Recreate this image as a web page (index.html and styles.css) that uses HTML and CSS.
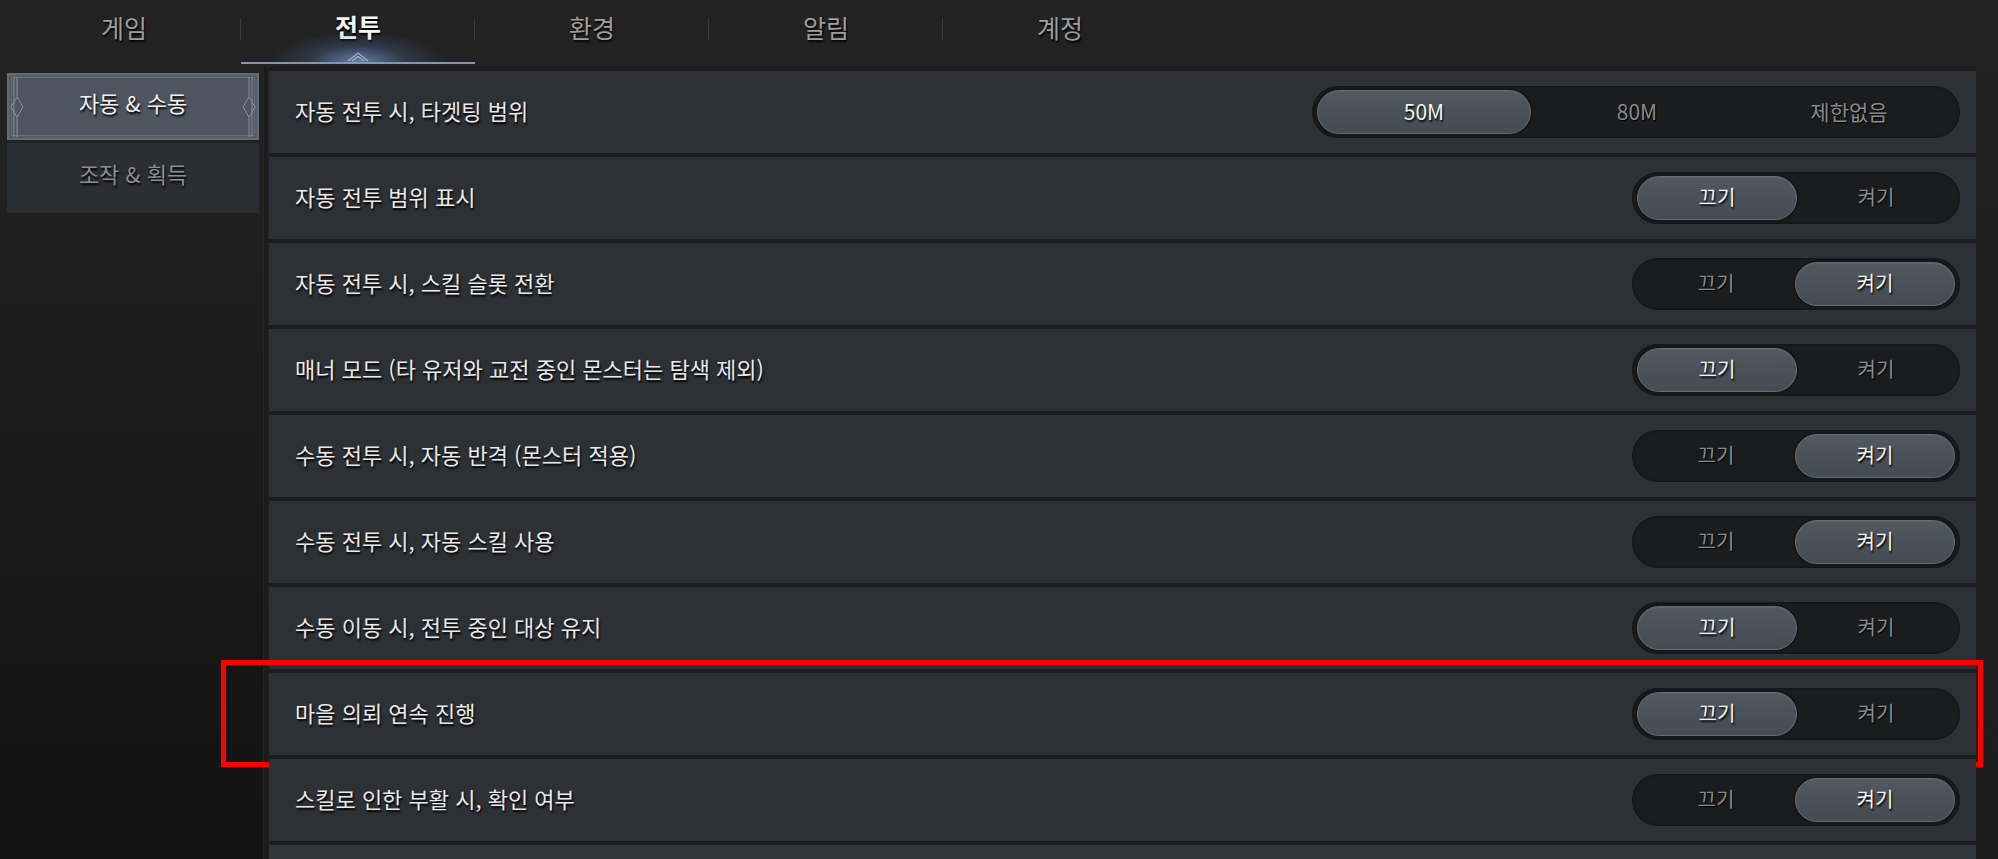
FILE: index.html
```html
<!DOCTYPE html>
<html lang="ko">
<head>
<meta charset="utf-8">
<title>설정 - 전투</title>
<link rel="stylesheet" href="styles.css">
</head>
<body>
<div class="screen">
  <nav class="tabs">
    <div class="tab">게임</div>
    <div class="tab active">전투
      <span class="tab-glow"></span>
      <svg class="tab-orn" width="30" height="12" viewBox="0 0 30 12"><path d="M5 11 L15 3 L25 11 M9 11 L15 6.5 L21 11" fill="none" stroke="#9fb3cf" stroke-width="1.3"/></svg>
    </div>
    <div class="tab">환경</div>
    <div class="tab">알림</div>
    <div class="tab last">계정</div>
  </nav>
  <div class="main">
    <aside class="side">
      <div class="side-item selected">자동 &amp; 수동
        <svg class="orn orn-l" width="16" height="64" viewBox="0 0 16 64"><path d="M4 2 V62 M7 2 V22 M7 42 V62 M7 22 L13 32 L7 42 L1 32 Z" fill="none" stroke="#8a9098" stroke-width="1"/></svg>
        <svg class="orn orn-r" width="16" height="64" viewBox="0 0 16 64"><path d="M12 2 V62 M9 2 V22 M9 42 V62 M9 22 L15 32 L9 42 L3 32 Z" fill="none" stroke="#8a9098" stroke-width="1"/></svg>
      </div>
      <div class="side-item">조작 &amp; 획득</div>
    </aside>
    <div class="divider"></div>
    <section class="panel">
      <div class="row">
        <span class="label">자동 전투 시, 타겟팅 범위</span>
        <div class="toggle wide"><span class="opt on">50M</span><span class="opt">80M</span><span class="opt">제한없음</span></div>
      </div>
      <div class="row">
        <span class="label">자동 전투 범위 표시</span>
        <div class="toggle"><span class="opt on">끄기</span><span class="opt">켜기</span></div>
      </div>
      <div class="row">
        <span class="label">자동 전투 시, 스킬 슬롯 전환</span>
        <div class="toggle"><span class="opt">끄기</span><span class="opt on">켜기</span></div>
      </div>
      <div class="row">
        <span class="label">매너 모드 (타 유저와 교전 중인 몬스터는 탐색 제외)</span>
        <div class="toggle"><span class="opt on">끄기</span><span class="opt">켜기</span></div>
      </div>
      <div class="row">
        <span class="label">수동 전투 시, 자동 반격 (몬스터 적용)</span>
        <div class="toggle"><span class="opt">끄기</span><span class="opt on">켜기</span></div>
      </div>
      <div class="row">
        <span class="label">수동 전투 시, 자동 스킬 사용</span>
        <div class="toggle"><span class="opt">끄기</span><span class="opt on">켜기</span></div>
      </div>
      <div class="row">
        <span class="label">수동 이동 시, 전투 중인 대상 유지</span>
        <div class="toggle"><span class="opt on">끄기</span><span class="opt">켜기</span></div>
      </div>
      <div class="row marked">
        <span class="label">마을 의뢰 연속 진행</span>
        <div class="toggle"><span class="opt on">끄기</span><span class="opt">켜기</span></div>
        <div class="highlight"></div>
      </div>
      <div class="row">
        <span class="label">스킬로 인한 부활 시, 확인 여부</span>
        <div class="toggle"><span class="opt">끄기</span><span class="opt on">켜기</span></div>
      </div>
      <div class="row next"></div>
    </section>
  </div>
</div>
</body>
</html>
```

FILE: styles.css
```css
* { box-sizing: border-box; }
html, body {
  margin: 0;
  padding: 0;
  width: 1998px;
  height: 859px;
  overflow: hidden;
  background: #1f1f1f;
  font-family: "Noto Sans CJK KR", "Noto Sans", sans-serif;
  color: #e8e8e8;
}
.screen {
  width: 1998px;
  height: 859px;
  display: flex;
  flex-direction: column;
  background: linear-gradient(180deg, #232323 0px, #202020 260px, #1d1d1d 859px);
}

/* ---------- tabs ---------- */
.tabs {
  height: 67px;
  flex: none;
  display: flex;
  padding-left: 7px;
}
.tab {
  position: relative;
  width: 234px;
  height: 60px;
  display: flex;
  align-items: center;
  justify-content: center;
  padding-bottom: 5px;
  font-size: 25px;
  line-height: 1;
  color: #9d9d9d;
  text-shadow: 1px 2px 2px #000;
}
.tab::after {
  content: "";
  position: absolute;
  right: 0;
  top: 18px;
  width: 1px;
  height: 22px;
  background: #3a3a3a;
}
.tab.last::after { display: none; }
.tab.active {
  color: #f4f4f4;
  font-weight: 700;
  height: 64px;
  padding-bottom: 9px;
  border-bottom: 2px solid #8595aa;
}
.tab-glow {
  position: absolute;
  left: 30px;
  right: 30px;
  bottom: 0;
  height: 30px;
  background: radial-gradient(ellipse 50% 100% at 50% 100%, rgba(125,165,225,0.7), rgba(85,125,185,0.25) 55%, rgba(60,90,140,0) 100%);
  pointer-events: none;
}
.tab-orn {
  position: absolute;
  left: 102px;
  bottom: 0;
}

/* ---------- main ---------- */
.main {
  flex: 1;
  display: flex;
  min-height: 0;
}
.side {
  width: 263px;
  flex: none;
  padding: 6px 4px 0 7px;
  display: flex;
  flex-direction: column;
  gap: 3px;
  background: linear-gradient(180deg, rgba(0,0,0,0) 0px, rgba(0,0,0,0) 120px, #131313 792px);
}
.side-item {
  position: relative;
  height: 70px;
  background: #2b2e32;
  display: flex;
  align-items: center;
  justify-content: center;
  padding-bottom: 10px;
  font-size: 22px;
  line-height: 1;
  color: #8e8e8e;
  text-shadow: 1px 2px 2px #000;
}
.side-item.selected {
  height: 67px;
  background: #4e555e;
  border: 2px solid #656b73;
  color: #f0f0f0;
  box-shadow: inset 0 0 0 2px #545b64, inset 0 0 0 3px #6a7078;
}
.orn {
  position: absolute;
  top: 50%;
  margin-top: -32px;
}
.orn-l { left: 1px; }
.orn-r { right: 1px; }

.divider {
  width: 4px;
  flex: none;
  background: #1c1c1c;
  border-left: 1px solid #262626;
  margin-right: 2px;
}

.panel {
  width: 1707px;
  flex: none;
  padding-top: 4px;
  display: flex;
  flex-direction: column;
  gap: 4px;
  background: #1c1d1f;
}
.row {
  position: relative;
  height: 82px;
  flex: none;
  display: flex;
  align-items: center;
  justify-content: space-between;
  padding: 0 16px 0 26px;
  background: #2d3034;
}
.row.next { background: #33363b; }
.label {
  font-size: 22px;
  line-height: 1;
  padding-bottom: 5px;
  color: #e9e9e9;
  text-shadow: 1px 2px 2px #000;
}

/* ---------- toggles ---------- */
.toggle {
  width: 328px;
  height: 52px;
  padding: 4px 5px;
  border-radius: 26px;
  background: #1b1c1e;
  display: flex;
  box-shadow: inset 0 0 3px rgba(0,0,0,0.6);
}
.toggle.wide { width: 648px; }
.opt {
  flex: 1;
  height: 44px;
  border-radius: 22px;
  display: flex;
  align-items: center;
  justify-content: center;
  padding-bottom: 2px;
  font-size: 20px;
  line-height: 1;
  color: #8a8a8a;
  text-shadow: 1px 1px 1px #000;
}
.toggle.wide .opt { font-size: 21px; }
.opt.on {
  background: linear-gradient(180deg, #515860 0%, #4a5058 60%, #464c54 100%);
  border: 1px solid #666c74;
  box-shadow: 0 0 0 2px #161718, inset 0 1px 0 rgba(255,255,255,0.06);
  color: #f2f2f2;
  text-shadow: 1px 2px 2px #000;
}

/* ---------- annotation ---------- */
.highlight {
  position: absolute;
  left: -48px;
  right: -7px;
  top: -13px;
  bottom: -12px;
  border: 5px solid #ff0000;
  pointer-events: none;
}
```
